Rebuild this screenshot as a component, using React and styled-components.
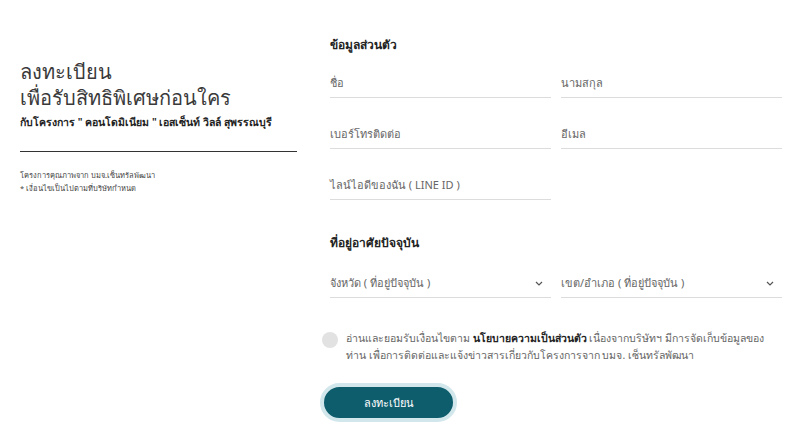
import styled, { createGlobalStyle } from "styled-components";

const GlobalStyle = createGlobalStyle`
    body {
        margin: 0;
        background: #ffffff;
        font-family: "Noto Sans", "Open Sans", sans-serif;
        color: #333;
    }
`;

const Page = styled.div`
    display: grid;
    grid-template-columns: 277px 460px;
    column-gap: 25px;
    padding-left: 20px;
    width: 800px;
    height: 436px;
    box-sizing: border-box;
    overflow: hidden;
`;

const Intro = styled.div`
    padding-top: 59px;
`;

const Title = styled.h1`
    margin: 0;
    font-size: 20px;
    line-height: 26px;
    font-weight: 300;
    color: #3a3a3a;
`;

const Subtitle = styled.div`
    margin-top: 3px;
    font-size: 10.5px;
    line-height: 16px;
    font-weight: 600;
    color: #222;
    white-space: nowrap;
`;

const Divider = styled.hr`
    margin: 21px 0 0;
    border: none;
    height: 1px;
    background: #333;
`;

const Note = styled.div`
    margin-top: 17px;
    font-size: 7.5px;
    line-height: 13px;
    color: #444;
`;

const Form = styled.form`
    padding-top: 36px;
`;

const Section = styled.div`
    padding-left: 8px;
    & + & {
        margin-top: 34px;
    }
`;

const Heading = styled.h2`
    margin: 0 0 ${(p) => p.gap || 13}px;
    font-size: 12px;
    line-height: 18px;
    font-weight: 700;
    color: #222;
`;

const Grid = styled.div`
    display: grid;
    grid-template-columns: 221px 221px;
    column-gap: 10px;
    row-gap: 20px;
`;

const Field = styled.div`
    display: flex;
    align-items: center;
    justify-content: space-between;
    padding: 8px 8px 6px 0;
    font-size: 11px;
    line-height: 16px;
    color: #666;
    border-bottom: 1px solid #dcdcdc;
`;

const Chevron = () => (
    <svg width="8" height="5" viewBox="0 0 8 5">
        <path d="M1 1l3 3 3-3" fill="none" stroke="#555" strokeWidth="1.2" />
    </svg>
);

const Consent = styled.label`
    display: flex;
    align-items: flex-start;
    gap: 8px;
    margin-top: 32px;
    font-size: 10.5px;
    line-height: 17px;
    color: #666;
    white-space: nowrap;
`;

const Circle = styled.span`
    flex: none;
    width: 16px;
    height: 16px;
    margin-top: 2px;
    border-radius: 50%;
    background: #e2e2e2;
`;

const Strong = styled.b`
    color: #222;
`;

const Button = styled.button`
    display: block;
    margin-top: 19px;
    margin-left: -2px;
    width: 137px;
    height: 39px;
    border: 4px solid #d2e7eb;
    border-radius: 20px;
    background: #0e5d6d;
    color: #ffffff;
    font-family: inherit;
    font-size: 11px;
    cursor: pointer;
`;

export default function App() {
    return (
        <>
            <GlobalStyle />
            <Page>
                <Intro>
                    <Title>
                        ลงทะเบียน
                        <br />
                        เพื่อรับสิทธิพิเศษก่อนใคร
                    </Title>
                    <Subtitle>
                        กับโครงการ " คอนโดมิเนียม " เอสเซ็นท์ วิลล์ สุพรรณบุรี
                    </Subtitle>
                    <Divider />
                    <Note>
                        โครงการคุณภาพจาก บมจ.เซ็นทรัลพัฒนา
                        <br />* เงื่อนไขเป็นไปตามที่บริษัทกำหนด
                    </Note>
                </Intro>
                <Form onSubmit={(e) => e.preventDefault()}>
                    <Section>
                        <Heading>ข้อมูลส่วนตัว</Heading>
                        <Grid>
                            <Field>ชื่อ</Field>
                            <Field>นามสกุล</Field>
                            <Field>เบอร์โทรติดต่อ</Field>
                            <Field>อีเมล</Field>
                            <Field>ไลน์ไอดีของฉัน ( LINE ID )</Field>
                        </Grid>
                    </Section>
                    <Section>
                        <Heading gap={15}>ที่อยู่อาศัยปัจจุบัน</Heading>
                        <Grid>
                            <Field>
                                จังหวัด ( ที่อยู่ปัจจุบัน )
                                <Chevron />
                            </Field>
                            <Field>
                                เขต/อำเภอ ( ที่อยู่ปัจจุบัน )
                                <Chevron />
                            </Field>
                        </Grid>
                    </Section>
                    <Consent>
                        <Circle />
                        <span>
                            อ่านและยอมรับเงื่อนไขตาม <Strong>นโยบายความเป็นส่วนตัว</Strong>{" "}
                            เนื่องจากบริษัทฯ มีการจัดเก็บข้อมูลของ
                            <br />
                            ท่าน เพื่อการติดต่อและแจ้งข่าวสารเกี่ยวกับโครงการจาก บมจ. เซ็นทรัลพัฒนา
                        </span>
                    </Consent>
                    <Button type="submit">ลงทะเบียน</Button>
                </Form>
            </Page>
        </>
    );
}
